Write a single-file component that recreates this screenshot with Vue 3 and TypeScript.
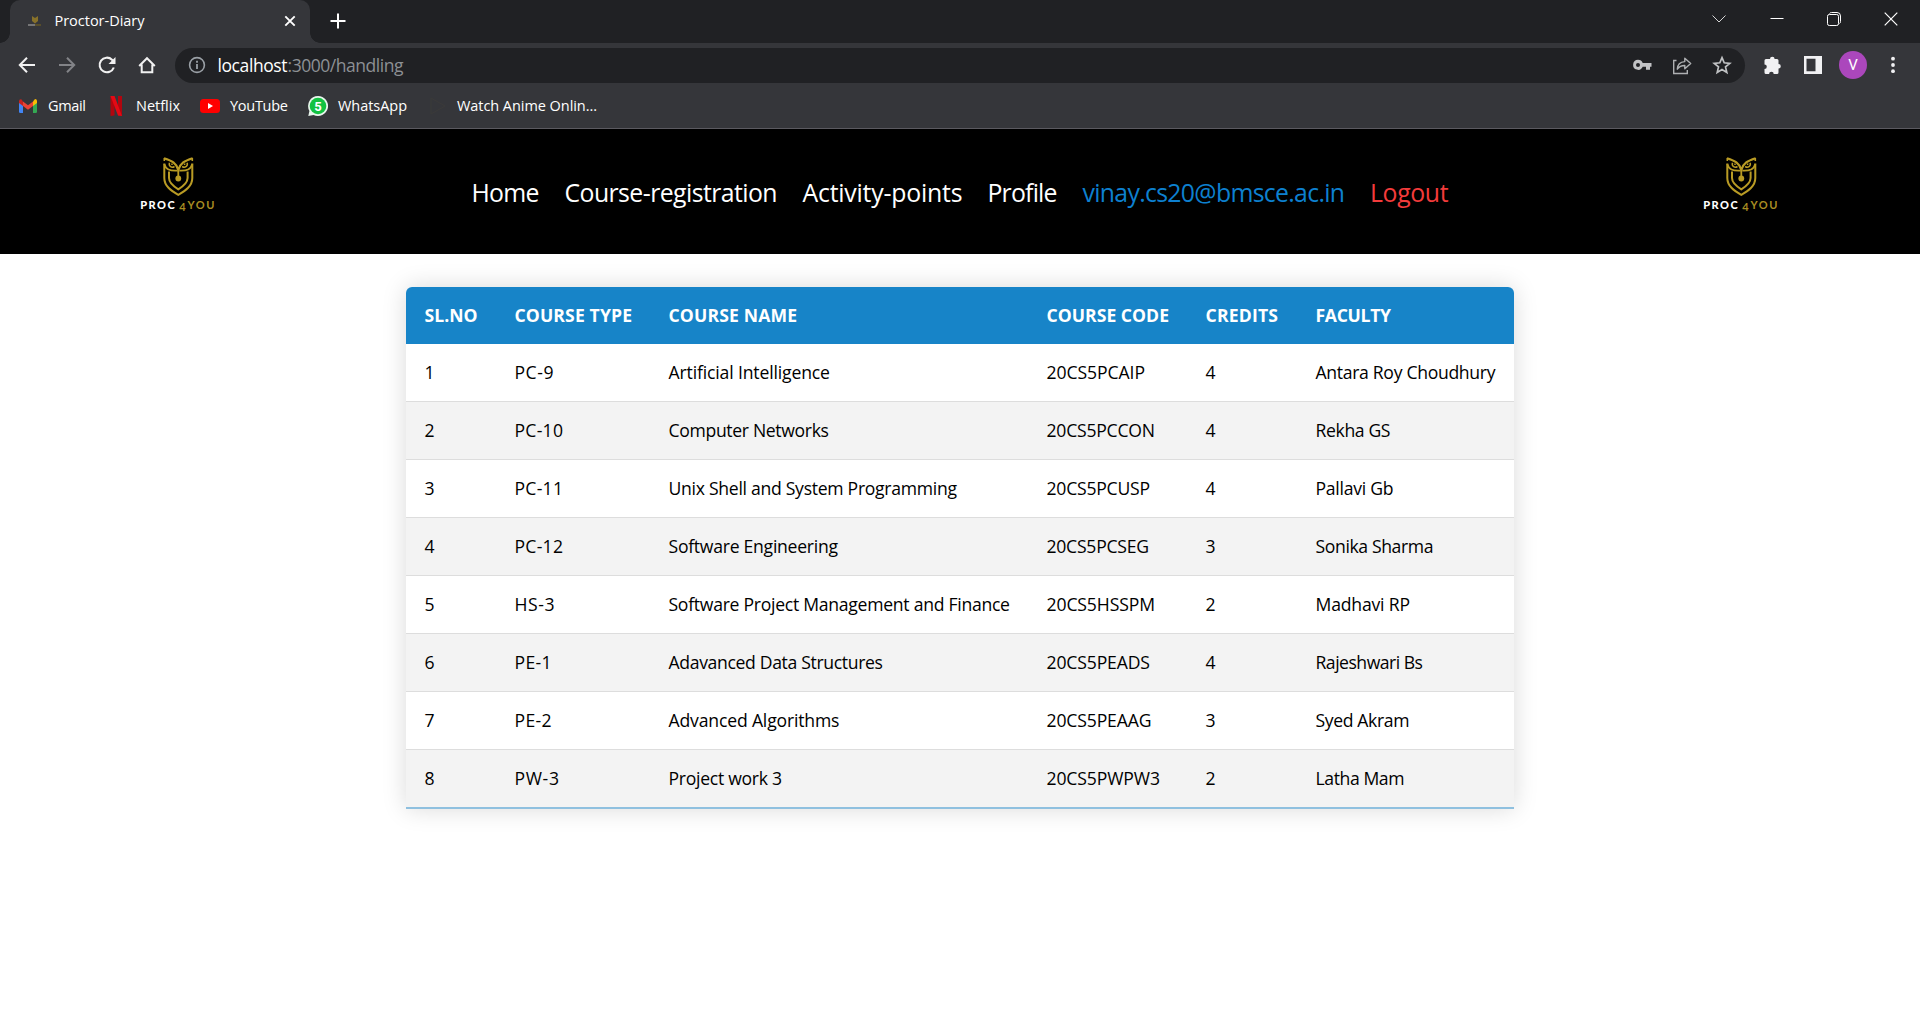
<script setup lang="ts">
import type { Directive } from 'vue'

type Fitted = [text: string, width: number]

// Tracks a label so that its glyphs span the given width in pixels.
const vFit: Directive<HTMLElement, number> = {
  mounted(el, { value }) {
    const count = (el.textContent ?? '').trim().length
    const natural = el.getBoundingClientRect().width
    if (count > 1) el.style.letterSpacing = `${(value - natural) / (count - 1)}px`
    el.style.width = `${value}px`
  },
}

const links: { text: string; width: number; tone: string }[] = [
  { text: 'Home', width: 68, tone: 'plain' },
  { text: 'Course-registration', width: 213, tone: 'plain' },
  { text: 'Activity-points', width: 160, tone: 'plain' },
  { text: 'Profile', width: 70, tone: 'plain' },
  { text: 'vinay.cs20@bmsce.ac.in', width: 262.5, tone: 'user' },
  { text: 'Logout', width: 78.5, tone: 'danger' },
]

const headings: Fitted[] = [
  ['SL.NO', 53], ['COURSE TYPE', 117.5], ['COURSE NAME', 128.5],
  ['COURSE CODE', 122.5], ['CREDITS', 72.5], ['FACULTY', 75.5],
]

const rows: Fitted[][] = [
  [['1', 10], ['PC-9', 39], ['Artificial Intelligence', 161.5], ['20CS5PCAIP', 98.5], ['4', 10], ['Antara Roy Choudhury', 180]],
  [['2', 10], ['PC-10', 48.5], ['Computer Networks', 160.5], ['20CS5PCCON', 108.5], ['4', 10], ['Rekha GS', 75]],
  [['3', 10], ['PC-11', 48.5], ['Unix Shell and System Programming', 288.5], ['20CS5PCUSP', 103.5], ['4', 10], ['Pallavi Gb', 78]],
  [['4', 10], ['PC-12', 48.5], ['Software Engineering', 169.5], ['20CS5PCSEG', 102.5], ['3', 10], ['Sonika Sharma', 118]],
  [['5', 10], ['HS-3', 40], ['Software Project Management and Finance', 341.5], ['20CS5HSSPM', 108.5], ['2', 10], ['Madhavi RP', 94.5]],
  [['6', 10], ['PE-1', 37], ['Adavanced Data Structures', 214.5], ['20CS5PEADS', 103.5], ['4', 10], ['Rajeshwari Bs', 107.5]],
  [['7', 10], ['PE-2', 37], ['Advanced Algorithms', 171], ['20CS5PEAAG', 105], ['3', 10], ['Syed Akram', 94]],
  [['8', 10], ['PW-3', 44.5], ['Project work 3', 113.5], ['20CS5PWPW3', 113.5], ['2', 10], ['Latha Mam', 89]],
]
</script>

<template>
  <div class="window">
    <div class="tabstrip">
      <span class="flare"></span>
      <div class="tab">
        <svg class="favicon" width="14" height="12" viewBox="0 0 14 12">
          <path d="M4 1l3 2 3-2v5L7 8.500 4 6z" fill="#87712a" />
          <path d="M0 10h7" stroke="#8b8b8b" stroke-width="1.500" />
          <path d="M7 10h6" stroke="#655727" stroke-width="1.500" />
        </svg>
        <span v-fit="90" class="tab-title">Proctor-Diary</span>
        <svg class="tab-close" width="12" height="12" viewBox="0 0 12 12"><path d="M1.300 1.300l9.400 9.400M10.700 1.300L1.300 10.700" stroke="#fff" stroke-width="1.900" /></svg>
      </div>
      <span class="flare right"></span>
      <svg class="plus" width="16" height="16" viewBox="0 0 16 16"><path d="M8 .500v15M.500 8h15" stroke="#fff" stroke-width="2" /></svg>
      <div class="controls">
        <svg viewBox="0 0 14 14"><path d="M.500 3.500L7 10l6.500-6.500" fill="none" stroke="#d6d6d6" /></svg>
        <svg viewBox="0 0 14 14"><path d="M.500 6.500h13" stroke="#fff" /></svg>
        <svg viewBox="0 0 14 14" fill="none" stroke="#fff"><rect x=".5" y="2.500" width="11" height="11" rx="1.800" /><path d="M2.500 1.500Q3 .500 4.500.500H10Q13.500.500 13.500 4v5.500q0 1.500-1 2" /></svg>
        <svg viewBox="0 0 14 14"><path d="M.700.700l12.600 12.600M13.300.700L.700 13.300" stroke="#fff" stroke-width="1.200" /></svg>
      </div>
    </div>

    <div class="toolbar">
      <div class="nav-buttons">
        <svg viewBox="0 0 20 20"><path d="M18 10H3M10 2.800L2.800 10l7.200 7.200" fill="none" stroke="#f1f1f1" stroke-width="2" /></svg>
        <svg viewBox="0 0 20 20"><path d="M2 10h15M10 2.800l7.200 7.200-7.200 7.200" fill="none" stroke="#828387" stroke-width="2" /></svg>
        <svg viewBox="0 0 20 20"><path d="M16.800 12.500A7.300 7.300 0 1 1 15 4.700L17 6.800" fill="none" stroke="#f1f1f1" stroke-width="2.100" /><path d="M18.500 2v7h-7z" fill="#f1f1f1" /></svg>
        <svg viewBox="0 0 20 20"><path d="M2.200 11L10 3.200l7.800 7.800M4.700 9.500v7.800h10.600V9.500" fill="none" stroke="#f1f1f1" stroke-width="2" /></svg>
      </div>
      <div class="omnibox">
        <svg class="info" width="18" height="18" viewBox="0 0 18 18"><circle cx="9" cy="9" r="7.400" fill="none" stroke="#9aa0a6" stroke-width="1.600" /><path d="M9 8v5M9 4.800v1.900" stroke="#9aa0a6" stroke-width="1.800" /></svg>
        <span v-fit="70" class="host">localhost</span><span v-fit="116" class="path">:3000/handling</span>
        <div class="page-actions">
          <svg viewBox="0 0 20 20"><path d="M6 4.800a5 5 0 1 0 4.700 7H14v3h4v-3h1.500V8H10.700A5 5 0 0 0 6 4.800zM6 8a2 2 0 1 1 0 4 2 2 0 0 1 0-4z" fill="#c2c3c5" fill-rule="evenodd" /></svg>
          <svg viewBox="0 0 20 20"><path d="M4.500 5.500H1.700v13h13.600v-3.500" fill="none" stroke="#aeb0b2" stroke-width="1.400" /><path d="M5.300 14.200C5.500 9.500 8 6.900 12.800 6.600V3.200L18.700 8.500l-5.900 5.300v-3.300c-3.500 0-5.700 1-7.500 3.700z" fill="none" stroke="#aeb0b2" stroke-width="1.400" stroke-linejoin="round" /></svg>
          <svg viewBox="0 0 20 20"><path d="M10 2.700l2.200 5.100 5.600.500-4.300 3.600 1.300 5.500-4.800-2.900-4.800 2.900 1.300-5.500-4.300-3.600 5.600-.500z" fill="none" stroke="#c0c2c4" stroke-width="1.700" /></svg>
        </div>
      </div>
      <div class="extras">
        <svg width="20" height="20" viewBox="0 0 20 20"><path d="M3 4h4a2.300 2.300 0 0 1 4.600 0H14q1.500 0 1.500 1.500V9a2.300 2.300 0 0 1 0 4.600v3.900q0 1.500-1.500 1.500h-3.300a2.300 2.300 0 0 0-4.600 0H3q-1.500 0-1.500-1.500v-3.400a2.300 2.300 0 0 0 0-4.600V5.500Q1.500 4 3 4z" fill="#f1f1f3" /></svg>
        <svg width="20" height="20" viewBox="0 0 20 20"><path d="M1 1h18v18H1zm2.500 2.700v12.600h9V3.700z" fill="#f1f1f3" fill-rule="evenodd" /></svg>
        <span class="avatar">V</span>
        <svg width="20" height="20" viewBox="0 0 20 20" fill="#f1f1f3"><circle cx="10" cy="3.700" r="1.900" /><circle cx="10" cy="10" r="1.900" /><circle cx="10" cy="16.200" r="1.900" /></svg>
      </div>
    </div>

    <div class="bookmarks">
      <div class="bookmark">
        <svg viewBox="0 0 20 20"><path d="M1 5v10.700Q1 17 2.300 17H5V8z" fill="#4285f4" /><path d="M15 8v9h2.700q1.300 0 1.300-1.300V5z" fill="#34a853" /><path d="M15 5.500V10l4-3V5q0-2-2-2z" fill="#fbbc04" /><path d="M5 5.500V10l5 3.800 5-3.800V5.500L10 9.300z" fill="#ea4335" /><path d="M1 5v2l4 3V5.500L3.300 3.300Q1 3 1 5z" fill="#c5221f" /></svg>
        <span v-fit="38">Gmail</span>
      </div>
      <div class="bookmark">
        <svg viewBox="0 0 20 20"><path d="M4.500 0h4v19.500l-4 .500zM12 0h4v20l-4-.500z" fill="#b1060f" /><path d="M4.500 0h4L16 20l-4-.500z" fill="#e50914" /></svg>
        <span v-fit="44">Netflix</span>
      </div>
      <div class="bookmark">
        <svg viewBox="0 0 20 20"><rect y="3" width="20" height="14" rx="3.500" fill="#f00" /><path d="M8 7l5 3-5 3z" fill="#fff" /></svg>
        <span v-fit="58">YouTube</span>
      </div>
      <div class="bookmark">
        <svg viewBox="0 0 20 20"><path d="M10 0A10 10 0 1 1 5.500 18.900L.300 20l1.100-5A10 10 0 0 1 10 0z" fill="#e8f5ec" /><circle cx="10" cy="10" r="8.300" fill="#12c241" /><text x="10" y="15" text-anchor="middle" class="badge">5</text></svg>
        <span v-fit="69">WhatsApp</span>
      </div>
      <div class="bookmark">
        <svg viewBox="0 0 20 20"><path d="M4 2l14 8-14 8z" fill="none" stroke="#3b3a39" /></svg>
        <span v-fit="140">Watch Anime Onlin...</span>
      </div>
    </div>

    <header class="site-header">
      <svg v-for="side in ['left', 'right']" :key="side" class="logo" :class="side" width="80" height="60" viewBox="0 0 80 60">
        <g fill="none" stroke="#b99b24" stroke-width="2">
          <path d="M28.300 13.500V28c0 8 6.500 12.500 14 16.800 7.500-4.300 14-8.800 14-16.800V13.500" />
          <path d="M33 21.500V28c0 4.800 4 8 9.300 11.300 5.300-3.300 9.300-6.500 9.300-11.300v-6.500" />
          <path d="M28 8.300c8 2.500 12.300 4.700 14.300 11.700 2-7 6.300-9.200 14.300-11.700" stroke-width="2.200" />
          <path d="M28.300 14c1.500 5.500 5.200 7 13 6.600M56.300 14c-1.500 5.500-5.200 7-13 6.600" stroke-width="1.800" />
          <path d="M33.500 12.800c-1.200 3.700 2.300 5.400 5 3.700M36 13.500v1.500M51.100 12.800c1.200 3.700-2.300 5.400-5 3.700M48.600 13.500v1.500" stroke-width="1.500" />
          <path d="M42.300 19v9" stroke-width="1.800" />
          <path d="M28.300 8v3M56.300 8v3" stroke-width="1.600" />
        </g>
        <circle cx="42.300" cy="28.500" r="2.900" fill="#b99b24" />
        <text x="4.200" y="58.500" textLength="34.500" class="word proc">PROC</text>
        <text x="43.200" y="61" class="word four">4</text>
        <text x="51.500" y="58.500" textLength="27" class="word you">YOU</text>
      </svg>
      <nav class="links">
        <a v-for="link in links" :key="link.text" v-fit="link.width" :class="link.tone">{{ link.text }}</a>
      </nav>
    </header>

    <main class="content">
      <table class="courses">
        <colgroup>
          <col class="c-no" /><col class="c-type" /><col class="c-name" /><col class="c-code" /><col class="c-credits" /><col />
        </colgroup>
        <thead>
          <tr><th v-for="[text, width] in headings" :key="text"><span v-fit="width">{{ text }}</span></th></tr>
        </thead>
        <tbody>
          <tr v-for="row in rows" :key="row[0][0]">
            <td v-for="([text, width], i) in row" :key="i"><span v-fit="width">{{ text }}</span></td>
          </tr>
        </tbody>
      </table>
    </main>
  </div>
</template>

<style>
body {
  margin: 0;
  overflow: hidden;
}
</style>

<style scoped>
.window {
  width: 1920px;
  height: 1020px;
  background: #fff;
  font-family: "Open Sans", "Noto Sans", sans-serif;
  font-stretch: 94%;
  display: flex;
  flex-direction: column;
}
svg {
  display: block;
  flex: none;
}
span, a {
  display: inline-block;
  white-space: nowrap;
  flex: none;
}
.tabstrip {
  height: 43px;
  background: #202124;
  display: flex;
}
.flare {
  width: 10px;
  background: radial-gradient(circle at 0 33px, #202124 9.500px, #35363a 10px);
}
.flare:not(.right) {
  clip-path: inset(33px 0 0 0);
}
.flare.right {
  background: radial-gradient(circle at 10px 33px, #202124 9.500px, #35363a 10px);
  clip-path: inset(33px 0 0 0);
}
.tab {
  width: 300px;
  box-sizing: border-box;
  padding: 0 14px 2px 18px;
  background: #35363a;
  border-radius: 10px 10px 0 0;
  display: flex;
  align-items: center;
  color: #fff;
  font-size: 14.500px;
}
.tab-title {
  margin-left: 12.500px;
}
.tab-close {
  margin-left: auto;
}
.plus {
  margin: 13px 0 0 9.500px;
}
.controls {
  margin: 12px 22px 0 auto;
  display: flex;
  gap: 43.200px;
}
.controls svg {
  width: 14px;
  height: 14px;
}
.toolbar {
  height: 45px;
  box-sizing: border-box;
  background: #35363a;
  display: flex;
  align-items: center;
}
.nav-buttons {
  width: 175px;
  box-sizing: border-box;
  padding: 0 0 1px 17.400px;
  display: flex;
  gap: 20px;
}
.nav-buttons svg, .page-actions svg {
  width: 20px;
  height: 20px;
}
.omnibox {
  width: 1570px;
  height: 35px;
  box-sizing: border-box;
  padding: 0 13px 1px 13px;
  border-radius: 18px;
  background: #202124;
  display: flex;
  align-items: center;
  font-size: 17.500px;
}
.host {
  margin-left: 11.500px;
  color: #fff;
}
.path {
  color: #8d9094;
}
.page-actions {
  margin-left: auto;
  display: flex;
  gap: 20px;
}
.extras {
  margin-left: 17.500px;
  padding-bottom: 1px;
  display: flex;
  align-items: center;
  gap: 20px;
}
.avatar {
  width: 28px;
  height: 28px;
  margin: 0 -4.500px 0 -3.500px;
  border-radius: 50%;
  background: #ab47bc;
  color: #fff;
  font: 15px/28px Roboto, sans-serif;
  text-align: center;
}
.bookmarks {
  height: 41px;
  box-sizing: border-box;
  padding: 0 0 4px 18px;
  background: #35363a;
  border-bottom: 1px solid #5b5a60;
  display: flex;
  align-items: center;
  gap: 20px;
  color: #fff;
  font-size: 14.500px;
}
.bookmark {
  display: flex;
  align-items: center;
  gap: 10px;
}
.bookmark span {
  padding-bottom: 2px;
}
.bookmark svg {
  width: 20px;
  height: 20px;
}
.badge {
  font: bold 13px Roboto, sans-serif;
  fill: #fff;
}
.site-header {
  height: 125px;
  box-sizing: border-box;
  padding: 0 141.500px 0 136px;
  background: #000;
  display: flex;
  align-items: flex-start;
}
.logo {
  margin-top: 21px;
  overflow: visible;
}
.logo.right {
  order: 3;
  margin-left: auto;
}
.word {
  font-family: Lato, sans-serif;
  font-size: 11px;
}
.proc {
  font-weight: 900;
  fill: #fff;
}
.four, .you {
  font-weight: 700;
  fill: #a88d22;
}
.links {
  margin: 46px 0 0 255.500px;
  display: flex;
  gap: 25px;
  font-size: 24.800px;
  line-height: 34px;
}
.plain {
  color: #fff;
}
.user {
  color: #0d80d0;
}
.danger {
  color: #f33b3b;
}
.content {
  padding-top: 33px;
  display: flex;
  justify-content: center;
}
.courses {
  width: 1108px;
  table-layout: fixed;
  border-spacing: 0;
  border-radius: 6px 6px 0 0;
  overflow: hidden;
  box-shadow: 0 0 25px rgba(0, 0, 0, 0.15);
  font-size: 17.600px;
  line-height: 24px;
  color: #000;
}
.c-no { width: 90px; }
.c-type { width: 154px; }
.c-name { width: 378px; }
.c-code { width: 159px; }
.c-credits { width: 110px; }
th, td {
  height: 57px;
  box-sizing: border-box;
  padding: 0 0 2px 18.500px;
  text-align: left;
  vertical-align: middle;
}
th {
  background: #1784c8;
  color: #fff;
  font-weight: 700;
}
td {
  height: 58px;
  border-bottom: 1px solid #ddd;
}
th span, td span {
  display: block;
  width: max-content;
}
tbody tr:nth-child(even) td {
  background: #f3f3f3;
}
tbody tr:last-child td {
  height: 59px;
  border-bottom: 2px solid #8fc0df;
}
</style>
